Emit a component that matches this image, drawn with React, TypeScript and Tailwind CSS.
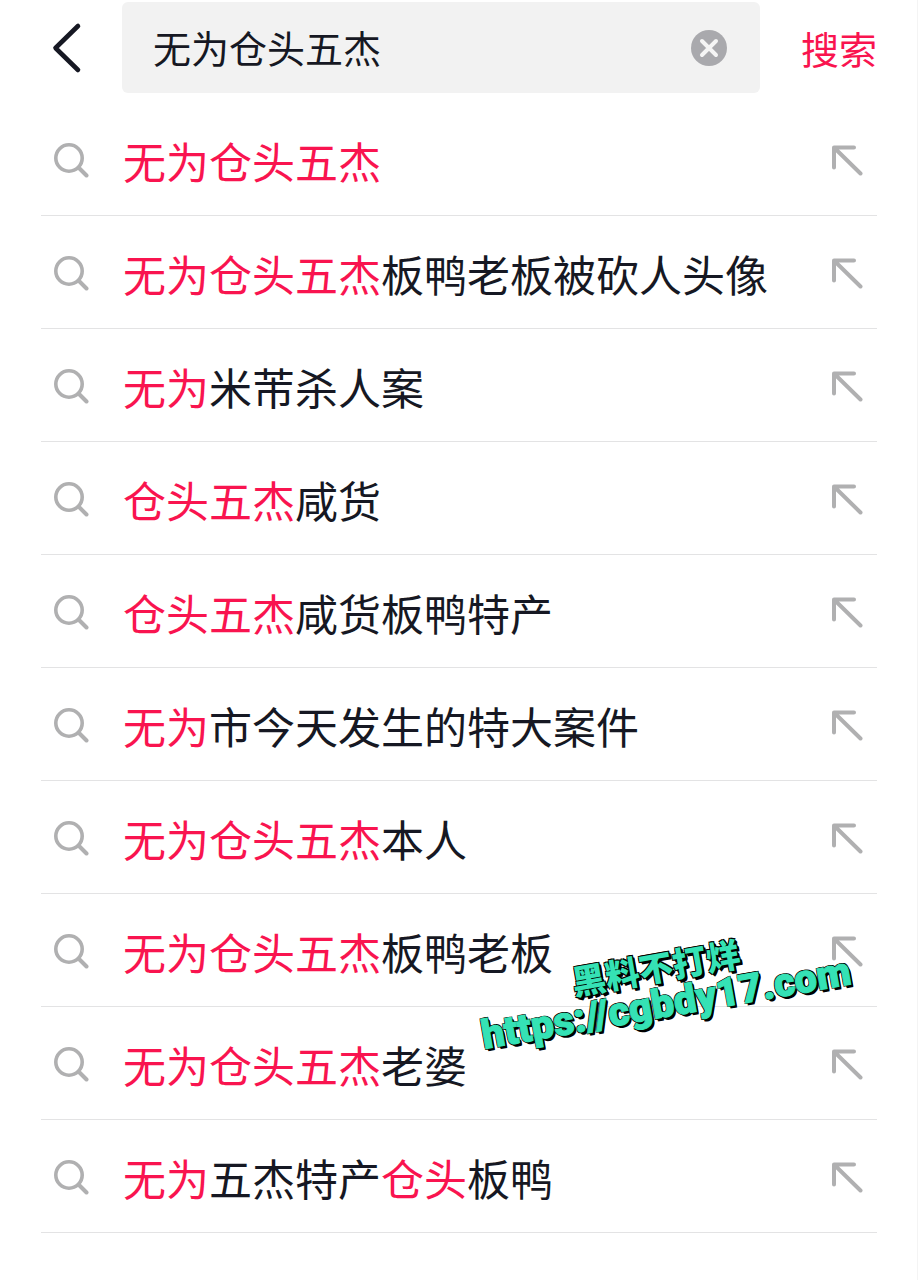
import { useState } from "react";

type Part = { text: string; hit?: boolean };

const suggestions: Part[][] = [
  [{ text: "无为仓头五杰", hit: true }],
  [{ text: "无为仓头五杰", hit: true }, { text: "板鸭老板被砍人头像" }],
  [{ text: "无为", hit: true }, { text: "米芾杀人案" }],
  [{ text: "仓头五杰", hit: true }, { text: "咸货" }],
  [{ text: "仓头五杰", hit: true }, { text: "咸货板鸭特产" }],
  [{ text: "无为", hit: true }, { text: "市今天发生的特大案件" }],
  [{ text: "无为仓头五杰", hit: true }, { text: "本人" }],
  [{ text: "无为仓头五杰", hit: true }, { text: "板鸭老板" }],
  [{ text: "无为仓头五杰", hit: true }, { text: "老婆" }],
  [
    { text: "无为", hit: true },
    { text: "五杰特产" },
    { text: "仓头", hit: true },
    { text: "板鸭" },
  ],
];

function BackIcon() {
  return (
    <svg width="32" height="52" viewBox="0 0 32 52" fill="none" className="text-[#161823]">
      <path d="M28 4 5.500 26 28 48" stroke="currentColor" strokeWidth="4.6" strokeLinecap="round" strokeLinejoin="round" />
    </svg>
  );
}

function ClearIcon() {
  return (
    <svg width="36" height="36" viewBox="0 0 36 36" fill="none">
      <circle cx="18" cy="18" r="18" fill="#a9a9ad" />
      <path d="m11 11 14 14M25 11 11 25" stroke="#f5f5f5" strokeWidth="4" strokeLinecap="round" />
    </svg>
  );
}

function SearchIcon() {
  return (
    <svg width="36" height="36" viewBox="0 0 36 36" fill="none" className="shrink-0 text-[#b0b0b1]">
      <circle cx="16" cy="15" r="13.2" stroke="currentColor" strokeWidth="3.6" />
      <path d="m26 25 7.500 7.500" stroke="currentColor" strokeWidth="4" strokeLinecap="round" />
    </svg>
  );
}

function FillIcon() {
  return (
    <svg width="32" height="32" viewBox="0 0 32 32" fill="none" className="text-[#b0b0b1]">
      <path d="M23 2.500H3V22.500M4 3.500 29.500 28.500" stroke="currentColor" strokeWidth="4" strokeLinecap="round" strokeLinejoin="round" />
    </svg>
  );
}

export default function App() {
  const [query, setQuery] = useState("无为仓头五杰");

  return (
    <main className="relative min-h-screen overflow-hidden border-r border-[#f4f4f4] bg-white pt-0.5 font-['Noto_Sans_CJK_SC',sans-serif] text-[#161823]">
      {/* Search bar */}
      <form className="flex items-center pr-10 pl-[50px]" onSubmit={(e) => e.preventDefault()}>
        <button type="button" aria-label="返回" className="mr-10 shrink-0">
          <BackIcon />
        </button>
        <div className="flex h-[91px] min-w-0 flex-1 items-center rounded-md bg-[#f2f2f2] pr-[33px] pl-[31px]">
          <input
            type="text"
            aria-label="搜索内容"
            value={query}
            onChange={(e) => setQuery(e.target.value)}
            className="h-14 min-w-0 flex-1 bg-transparent pb-0.5 text-[38px] outline-none"
          />
          <button type="button" aria-label="清除" onClick={() => setQuery("")} className="shrink-0">
            <ClearIcon />
          </button>
        </div>
        <button type="submit" className="ml-[41px] shrink-0 text-[38px] leading-14 text-[#f9144f]">
          搜索
        </button>
      </form>

      {/* Suggestions */}
      <ul className="mt-2.5 pr-10 pl-[41px]">
        {suggestions.map((parts, i) => (
          <li key={i} className="flex h-[113px] items-center border-b border-[#e3e3e4] pt-[3px] pr-3.5 pl-3">
            <button
              type="button"
              onClick={() => setQuery(parts.map((p) => p.text).join(""))}
              className="flex min-w-0 flex-1 items-center gap-[34px] text-left"
            >
              <SearchIcon />
              <span className="pb-0.5 text-[43px] leading-[60px] whitespace-nowrap">
                {parts.map((p, j) => (
                  <span key={j} className={p.hit ? "text-[#f9144f]" : ""}>
                    {p.text}
                  </span>
                ))}
              </span>
            </button>
            <button type="button" aria-label="填入搜索框" className="shrink-0">
              <FillIcon />
            </button>
          </li>
        ))}
      </ul>

      {/* Site stamp lying over the list */}
      <div className="pointer-events-none absolute top-[950px] right-[67px] -rotate-[10deg] text-center font-['Roboto','Noto_Sans_CJK_SC',sans-serif] font-black whitespace-nowrap text-[#35e2b5] [text-shadow:-1px_-1px_0_#000,1px_-1px_0_#000,-1px_1px_0_#000,1px_1px_0_#000,2px_2px_0_#000,2px_3px_0_#000]">
        <p className="pr-2 text-[34px] leading-9">黑料不打烊</p>
        <p className="text-[40px] leading-9 [-webkit-text-stroke:1px_#35e2b5]">https://cgbdy17.com</p>
      </div>
    </main>
  );
}
